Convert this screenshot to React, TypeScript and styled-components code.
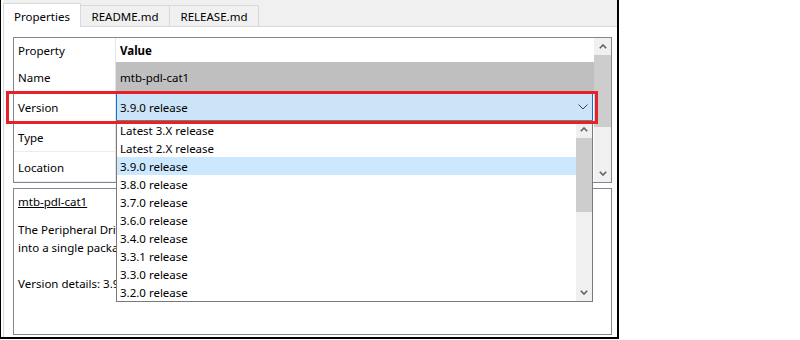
import React from "react";
import styled, { createGlobalStyle } from "styled-components";

const GlobalStyle = createGlobalStyle`
  html, body {
    margin: 0;
    padding: 0;
    background: #fff;
  }
  body {
    font-family: "Noto Sans", "Open Sans", sans-serif;
    font-size: 11.5px;
    color: #000;
  }
`;

const versions = [
  "Latest 3.X release",
  "Latest 2.X release",
  "3.9.0 release",
  "3.8.0 release",
  "3.7.0 release",
  "3.6.0 release",
  "3.4.0 release",
  "3.3.1 release",
  "3.3.0 release",
  "3.2.0 release",
];

const rows = [
  { name: "Name", value: "mtb-pdl-cat1" },
  { name: "Version", value: "3.9.0 release" },
  { name: "Type", value: "" },
  { name: "Location", value: "" },
];

const Chevron = ({ up }: { up?: boolean }) => (
  <svg width="8" height="5" viewBox="0 0 8 5">
    <polyline
      points={up ? "0.8,4.2 4,1 7.2,4.2" : "0.8,0.8 4,4 7.2,0.8"}
      fill="none"
      stroke="#606060"
      strokeWidth="1.6"
    />
  </svg>
);

const ScrollBar = ({ thumbTop, thumbSize, width }: { thumbTop: number; thumbSize: number; width: number }) => (
  <Bar $width={width}>
    <ArrowButton>
      <Chevron up />
    </ArrowButton>
    <Track>
      <Thumb $top={thumbTop} $size={thumbSize} />
    </Track>
    <ArrowButton>
      <Chevron />
    </ArrowButton>
  </Bar>
);

const App = () => {
  return (
    <>
      <GlobalStyle />
      <Window>
        <TabStrip>
          <Tab $active>Properties</Tab>
          <Tab>README.md</Tab>
          <Tab>RELEASE.md</Tab>
        </TabStrip>

        <Panel>
          <TableBox>
            <Grid>
              <HeadCell $divider>Property</HeadCell>
              <HeadCell $bold>Value</HeadCell>
              {rows.map((row) => (
                <React.Fragment key={row.name}>
                  <NameCell>{row.name}</NameCell>
                  {row.name === "Version" ? (
                    <Combo>
                      <span>{row.value}</span>
                      <svg width="10" height="6" viewBox="0 0 10 6">
                        <polyline points="0.5,0.5 5,5 9.5,0.5" fill="none" stroke="#444" strokeWidth="1" />
                      </svg>
                    </Combo>
                  ) : (
                    <ValueCell $readonly={row.name === "Name"}>{row.value}</ValueCell>
                  )}
                </React.Fragment>
              ))}
            </Grid>
            <ScrollBar width={17} thumbTop={0} thumbSize={72} />
          </TableBox>

          <Description>
            <TitleLink>mtb-pdl-cat1</TitleLink>
            <Para>
              The Peripheral Driver Library (PDL) integrates device header files and peripheral drivers
              <br />
              into a single package and supports the PSoC 6 MCU and CAT1 devices.
            </Para>
            <Para $gap={18}>Version details: 3.9.0 release</Para>
          </Description>
        </Panel>

        {/* open drop-down list of the Version combo */}
        <DropList>
          <Items>
            {versions.map((v) => (
              <Item key={v} $selected={v === "3.9.0 release"}>
                {v}
              </Item>
            ))}
          </Items>
          <ScrollBar width={16} thumbTop={0} thumbSize={74} />
        </DropList>

        <Highlight />
      </Window>
    </>
  );
};

const Window = styled.div`
  position: relative;
  width: 619px;
  height: 339px;
  box-sizing: border-box;
  border-left: 1px solid #000;
  border-right: 2px solid #000;
  border-bottom: 2px solid #000;
  padding-left: 2px;
  background: #fff;
  display: flex;
  flex-direction: column;
`;

const TabStrip = styled.div`
  display: flex;
  align-items: flex-end;
  height: 26px;
  background: #f0f0f0;
  border-bottom: 1px solid #d9d9d9;
`;

const Tab = styled.div<{ $active?: boolean }>`
  position: relative;
  z-index: ${(p) => (p.$active ? 1 : 0)};
  box-sizing: border-box;
  width: ${(p) => (p.$active ? 78 : 90)}px;
  height: ${(p) => (p.$active ? 24 : 21)}px;
  margin-left: ${(p) => (p.$active ? 0 : -1)}px;
  margin-bottom: ${(p) => (p.$active ? -1 : 0)}px;
  padding-top: ${(p) => (p.$active ? 4 : 2)}px;
  border: 1px solid #d9d9d9;
  border-bottom: none;
  background: ${(p) => (p.$active ? "#fff" : "#f0f0f0")};
  text-align: center;
  line-height: 18px;
`;

const Panel = styled.div`
  flex: 1;
  display: flex;
  flex-direction: column;
  gap: 5px;
  padding: 10px 5px 2px 9px;
  background: #fff;
  border-left: 1px solid #d9d9d9;
  min-height: 0;
`;

const TableBox = styled.div`
  display: flex;
  height: 146px;
  box-sizing: border-box;
  border: 1px solid #828790;
`;

const Grid = styled.div`
  flex: 1;
  display: grid;
  grid-template-columns: 102px 1fr;
  grid-template-rows: 24px repeat(4, 30px);
`;

const HeadCell = styled.div<{ $divider?: boolean; $bold?: boolean }>`
  display: flex;
  align-items: center;
  padding: 1px 0 0 4px;
  font-weight: ${(p) => (p.$bold ? 700 : 400)};
  border-right: ${(p) => (p.$divider ? "1px solid #e5e5e5" : "none")};
`;

const NameCell = styled.div`
  display: flex;
  align-items: center;
  padding: 1px 0 0 4px;
  border-right: 1px solid #e5e5e5;
  border-bottom: 1px solid #ececec;
`;

const ValueCell = styled.div<{ $readonly?: boolean }>`
  display: flex;
  align-items: center;
  padding: 1px 0 0 4px;
  margin-bottom: 1px;
  background: ${(p) => (p.$readonly ? "#bfbfbf" : "#fff")};
`;

const Combo = styled.div`
  display: flex;
  align-items: center;
  justify-content: space-between;
  box-sizing: border-box;
  padding: 1px 4px 0 3px;
  margin: 0 1px 1px 0;
  background: #cce4f7;
  border: 1px solid #0078d7;
  border-bottom-color: #8a9aa8;
`;

const Bar = styled.div<{ $width: number }>`
  width: ${(p) => p.$width}px;
  display: flex;
  flex-direction: column;
  background: #f0f0f0;
`;

const ArrowButton = styled.div`
  height: 17px;
  display: flex;
  align-items: center;
  justify-content: center;
`;

const Track = styled.div`
  flex: 1;
  display: flex;
  flex-direction: column;
`;

const Thumb = styled.div<{ $top: number; $size: number }>`
  margin: ${(p) => p.$top}px 0 0 0;
  height: ${(p) => p.$size}px;
  background: #cdcdcd;
`;

const Description = styled.div`
  flex: 1;
  box-sizing: border-box;
  border: 1px solid #828790;
  padding: 4px 4px 3px;
  line-height: 18px;
  overflow: hidden;
  white-space: nowrap;
`;

const TitleLink = styled.div`
  text-decoration: underline;
`;

const Para = styled.div<{ $gap?: number }>`
  margin-top: ${(p) => p.$gap ?? 10}px;
`;

const DropList = styled.div`
  position: absolute;
  left: 115px;
  top: 120px;
  width: 477px;
  height: 182px;
  box-sizing: border-box;
  display: flex;
  background: #fff;
  border: 1px solid #7a7a7a;
  z-index: 2;
`;

const Items = styled.div`
  flex: 1;
  display: flex;
  flex-direction: column;
`;

const Item = styled.div<{ $selected?: boolean }>`
  height: 18px;
  line-height: 20px;
  padding-left: 3px;
  background: ${(p) => (p.$selected ? "#cce8ff" : "transparent")};
`;

const Highlight = styled.div`
  position: absolute;
  left: 5px;
  top: 91px;
  width: 592px;
  height: 33px;
  box-sizing: border-box;
  border: 3px solid #e8202a;
  z-index: 3;
`;

export default App;
